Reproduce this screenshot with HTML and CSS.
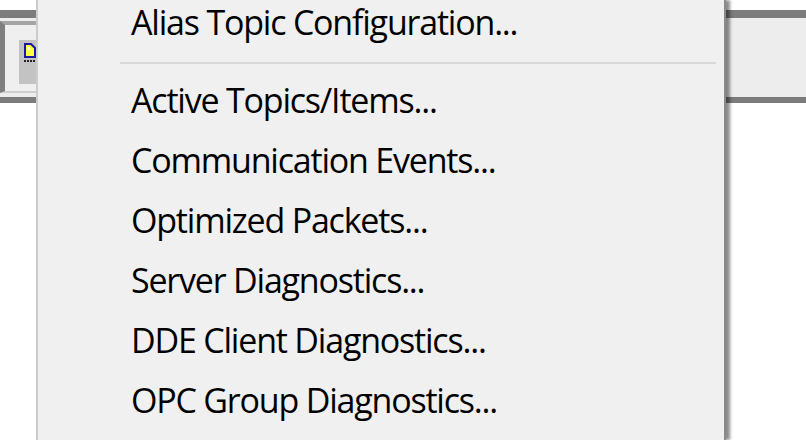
FILE: index.html
```html
<!DOCTYPE html>
<html>
<head>
<meta charset="utf-8">
<link rel="stylesheet" href="styles.css">
</head>
<body>
<div class="screen">
  <div class="toolbar">
    <div class="panel">
      <div class="tool-btn">
        <svg class="doc" width="12" height="15" viewBox="0 0 12 15">
          <path d="M1 1 H7 L11 5 V14 H1 Z" fill="#ffff40" stroke="#1a1aa0" stroke-width="2"/>
          <path d="M3 4 H6 V7 H3 Z" fill="#ffffff"/>
        </svg>
        <span class="dots"></span>
      </div>
    </div>
  </div>
  <div class="menu">
    <ul class="menu-list">
      <li class="item">Alias Topic Configuration...</li>
      <li class="sep"><span class="sep-line"></span></li>
      <li class="item">Active Topics/Items...</li>
      <li class="item">Communication Events...</li>
      <li class="item">Optimized Packets...</li>
      <li class="item">Server Diagnostics...</li>
      <li class="item">DDE Client Diagnostics...</li>
      <li class="item">OPC Group Diagnostics...</li>
    </ul>
  </div>
</div>
</body>
</html>
```
FILE: styles.css
```css
html, body {
  margin: 0;
  padding: 0;
  background: #ffffff;
}
.screen {
  position: relative;
  width: 806px;
  height: 440px;
  overflow: hidden;
  background: #ffffff;
}
.toolbar {
  margin-top: 10px;
  height: 93px;
  box-sizing: border-box;
  border-top: 8px solid #7c7c7c;
  border-bottom: 6px solid #7c7c7c;
  background: #ededed;
  padding-top: 3px;
  filter: blur(0.7px);
}
.panel {
  width: 300px;
  height: 72px;
  box-sizing: border-box;
  border-top: 4px solid #a4a4a4;
  border-left: 5px solid #7f7f7f;
  border-bottom: 2px solid #cfcfcf;
  background: #efefef;
  padding-left: 14px;
  padding-top: 15px;
}
.tool-btn {
  width: 24px;
  height: 44px;
  background: #c3c3c3;
  padding: 3px 0 0 5px;
  box-sizing: border-box;
}
.doc {
  display: block;
}
.dots {
  display: block;
  margin-top: 2px;
  width: 12px;
  height: 2px;
  background: repeating-linear-gradient(90deg, #222 0 2px, transparent 2px 3px);
}
.menu {
  position: absolute;
  left: 36px;
  top: 0;
  width: 690px;
  height: 440px;
  box-sizing: border-box;
  background: #f0f0f0;
  border-left: 2px solid #cccccc;
  border-right: 2px solid #8a8a8a;
  box-shadow: 4px 0 3px rgba(0, 0, 0, 0.45);
}
.menu-list {
  list-style: none;
  margin: -8px 0 0 0;
  padding: 0;
}
.item {
  height: 60px;
  line-height: 60px;
  padding-left: 93px;
  font-family: "Open Sans", "Noto Sans", sans-serif;
  font-size: 34px;
  letter-spacing: -1.2px;
  color: #000000;
  white-space: nowrap;
}
.sep {
  height: 18px;
  box-sizing: border-box;
  padding: 10px 8px 0 82px;
}
.sep-line {
  display: block;
  height: 2px;
  background: #d8d8d8;
}
```
